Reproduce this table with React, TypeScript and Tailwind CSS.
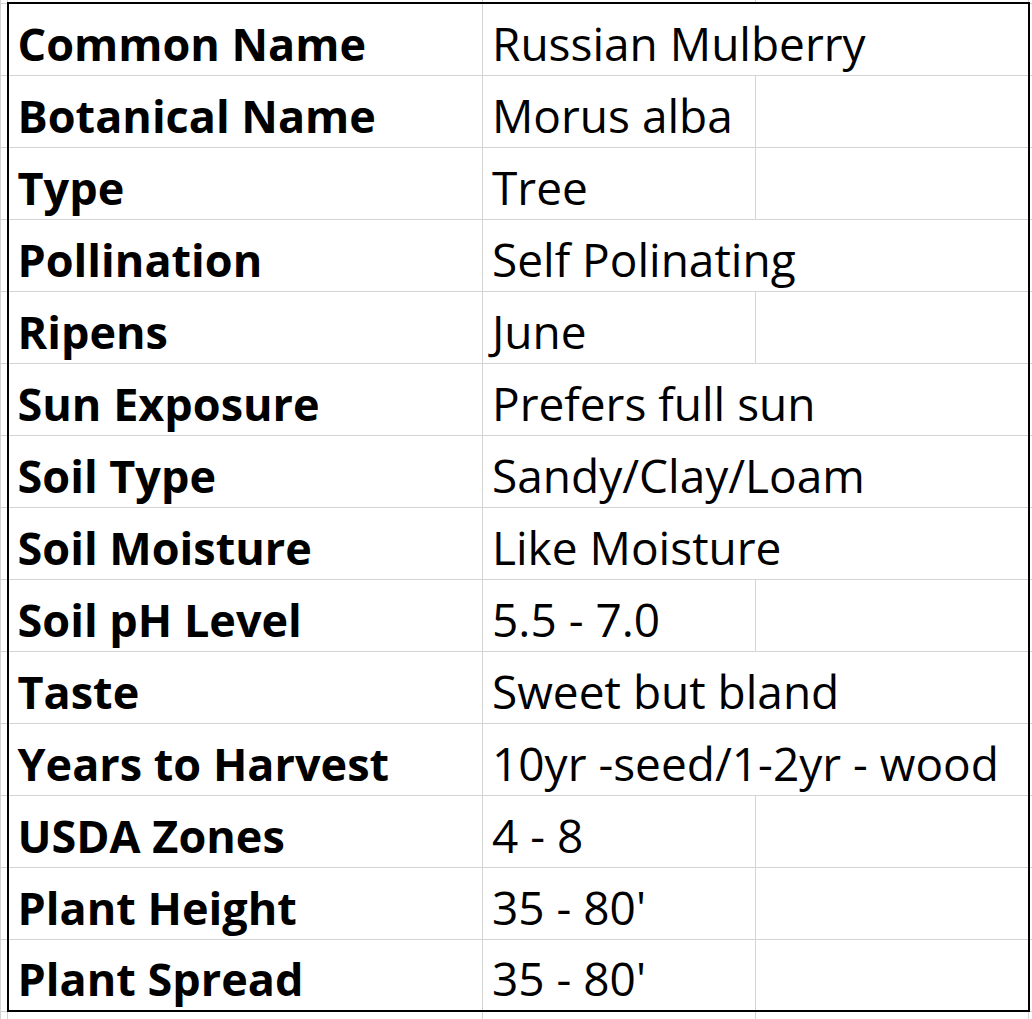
const rows: { label: string; value: string; wide?: boolean }[] = [
  { label: "Common Name", value: "Russian Mulberry", wide: true },
  { label: "Botanical Name", value: "Morus alba" },
  { label: "Type", value: "Tree" },
  { label: "Pollination", value: "Self Polinating", wide: true },
  { label: "Ripens", value: "June" },
  { label: "Sun Exposure", value: "Prefers full sun", wide: true },
  { label: "Soil Type", value: "Sandy/Clay/Loam", wide: true },
  { label: "Soil Moisture", value: "Like Moisture", wide: true },
  { label: "Soil pH Level", value: "5.5 - 7.0" },
  { label: "Taste", value: "Sweet but bland", wide: true },
  { label: "Years to Harvest", value: "10yr -seed/1-2yr - wood", wide: true },
  { label: "USDA Zones", value: "4 - 8" },
  { label: "Plant Height", value: "35 - 80'" },
  { label: "Plant Spread", value: "35 - 80'" },
];

const grid = "border border-[#d4d4d4] p-0";
const text = "align-bottom whitespace-nowrap pl-[9px] pb-[9px] leading-none text-black";

export default function App() {
  const last = rows.length - 1;
  return (
    <div className="w-[1032px] h-[1019px] overflow-hidden bg-white font-['Open_Sans',sans-serif]">
      <table className="border-collapse table-fixed w-[1050px]">
        <colgroup>
          <col className="w-[7px]" />
          <col className="w-[475px]" />
          <col className="w-[273px]" />
          <col className="w-[273px]" />
          <col className="w-[22px]" />
        </colgroup>
        <tbody>
          {/* stub of the sheet above the table */}
          <tr className="h-[3px]">
            {[0, 1, 2, 3, 4].map((i) => (
              <td key={i} className={`${grid} border-t-0`} />
            ))}
          </tr>
          {rows.map((r, i) => {
            const top = i === 0 ? "border-t-2 border-t-black" : "";
            const bottom = i === last ? "border-b-2 border-b-black" : "";
            return (
              <tr key={r.label} className="h-[72px]">
                <td className={grid} />
                <td className={`${grid} ${text} ${top} ${bottom} border-l-2 border-l-black text-[45px] font-bold`}>{r.label}</td>
                {r.wide ? (
                  <td colSpan={2} className={`${grid} ${text} ${top} ${bottom} border-r-2 border-r-black text-[46px]`}>{r.value}</td>
                ) : (
                  <>
                    <td className={`${grid} ${text} ${top} ${bottom} text-[46px]`}>{r.value}</td>
                    <td className={`${grid} ${top} ${bottom} border-r-2 border-r-black`} />
                  </>
                )}
                <td className={grid} />
              </tr>
            );
          })}
          <tr className="h-[20px]">
            {[0, 1, 2, 3, 4].map((i) => (
              <td key={i} className={grid} />
            ))}
          </tr>
        </tbody>
      </table>
    </div>
  );
}
